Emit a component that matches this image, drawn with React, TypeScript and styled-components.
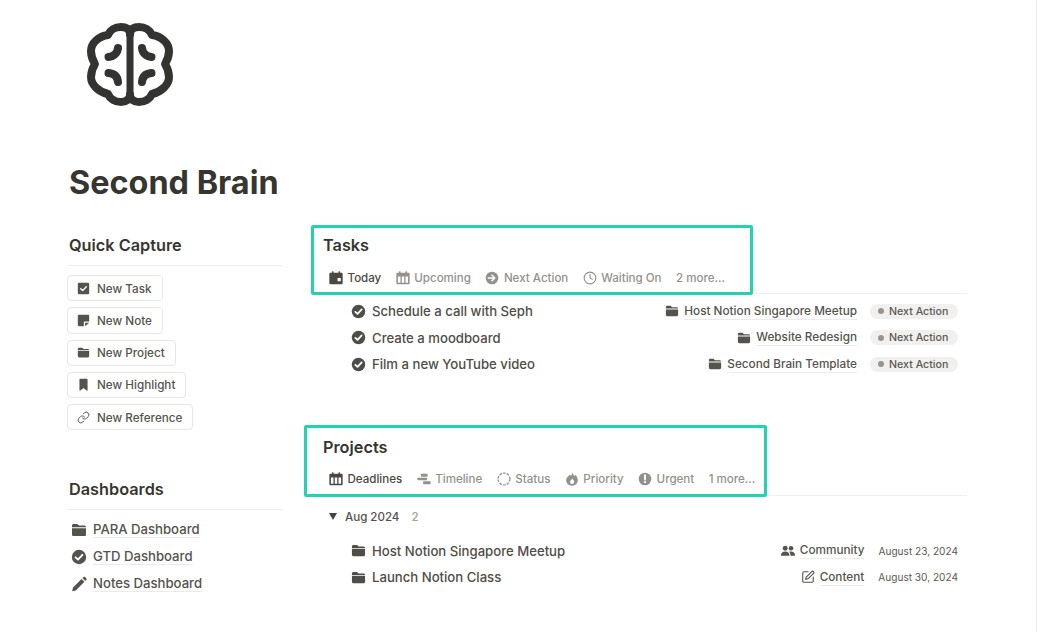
import React from 'react'
import styled, { createGlobalStyle } from 'styled-components'
import { Clock, Link, SquarePen } from 'lucide-react'

const Global = createGlobalStyle`
  html, body {
    margin: 0;
    padding: 0;
    background: #fff;
    font-family: Inter, "Liberation Sans", sans-serif;
    -webkit-font-smoothing: antialiased;
  }
  * { box-sizing: border-box; }
`

const Page = styled.div`
  width: 1037px;
  height: 632px;
  border-right: 1px solid #ececea;
  padding: 23px 0 0 67px;
  overflow: hidden;
  color: #37352f;
`
const Logo = styled.svg`
  display: block;
  width: 86px;
  height: 83px;
  margin-left: 20px;
  color: #333331;
`
const Title = styled.h1`
  margin: 57px 0 0 2px;
  height: 40px;
  line-height: 40px;
  font-size: 32.4px;
  font-weight: 700;
`
const Columns = styled.div`
  display: flex;
  gap: 41px;
  margin-top: 30px;
`
const Left = styled.div`
  width: 215px;
  flex: none;
`
const Right = styled.div`
  width: 644px;
  flex: none;
`
const SideHeading = styled.div<{ $top?: number }>`
  height: 33px;
  padding: 0 0 0 2px;
  line-height: 24px;
  font-size: 16.3px;
  font-weight: 600;
  border-bottom: 1px solid #eeeeec;
  margin-top: ${p => p.$top ?? 0}px;
`
const Buttons = styled.div`
  display: flex;
  flex-direction: column;
  align-items: flex-start;
  gap: 6px;
  margin-top: 9px;
`
const Button = styled.div`
  display: flex;
  align-items: center;
  gap: 7px;
  height: 26.25px;
  padding: 1px 10px 0 9px;
  border: 1px solid #e7e6e3;
  border-radius: 4px;
  font-size: 11.7px;
  font-weight: 500;
  color: #55534e;
  svg { width: 13px; height: 13px; flex: none; margin-top: -1px; }
`
const NavList = styled.div`
  margin-top: 6px;
`
const NavItem = styled.div`
  display: flex;
  align-items: center;
  height: 27px;
  padding-left: 4px;
  font-size: 13.15px;
  font-weight: 500;
  color: #55534e;
  svg { width: 16px; height: 16px; margin-right: 6px; flex: none; }
`
const Underlined = styled.span`
  line-height: 16px;
  border-bottom: 1px solid #ecebe9;
`
const Section = styled.section<{ $top?: number }>`
  position: relative;
  margin-top: ${p => p.$top ?? 0}px;
`
const Highlight = styled.div<{ $left: number; $top: number; $w: number; $h: number }>`
  position: absolute;
  left: ${p => p.$left}px;
  top: ${p => p.$top}px;
  width: ${p => p.$w}px;
  height: ${p => p.$h}px;
  border: 3px solid #22d3ae;
  border-radius: 2px;
`
const SectionTitle = styled.div`
  height: 24px;
  line-height: 24px;
  font-size: 16.3px;
  font-weight: 600;
`
const Tabs = styled.div`
  display: flex;
  align-items: center;
  gap: 14.5px;
  height: 27px;
  margin-top: 10px;
  padding: 0 0 5px 6px;
  border-bottom: 1px solid #eeeeec;
`
const Tab = styled.div<{ $active?: boolean }>`
  display: flex;
  align-items: center;
  gap: 4.5px;
  font-size: 11.55px;
  font-weight: 500;
  line-height: 20px;
  color: ${p => (p.$active ? '#4a4843' : '#93918c')};
  svg { width: 14px; height: 14px; flex: none; }
`
const Rows = styled.div<{ $top: number }>`
  margin-top: ${p => p.$top}px;
`
const Row = styled.div`
  display: flex;
  align-items: center;
  justify-content: space-between;
  height: 26.5px;
  padding: 0 9px 0 28px;
`
const RowTitle = styled.div`
  display: flex;
  align-items: center;
  gap: 6px;
  font-size: 13.15px;
  font-weight: 500;
  color: #4f4d48;
  svg { width: 15px; height: 15px; flex: none; }
`
const RowMeta = styled.div`
  display: flex;
  align-items: center;
  gap: 13px;
`
const MetaLink = styled.div`
  display: flex;
  align-items: center;
  gap: 5px;
  font-size: 11.75px;
  font-weight: 500;
  color: #55534e;
  svg { width: 14px; height: 14px; flex: none; }
`
const Pill = styled.div`
  display: flex;
  align-items: center;
  gap: 5px;
  width: 88px;
  height: 15px;
  padding-left: 8px;
  border-radius: 8px;
  background: #f1f0ee;
  font-size: 10.65px;
  font-weight: 500;
  color: #5c5a55;
`
const Dot = styled.span`
  width: 6px;
  height: 6px;
  border-radius: 50%;
  background: #979590;
`
const DateText = styled.div`
  margin-left: 1px;
  font-size: 10.1px;
  font-weight: 400;
  color: #5c5a55;
  white-space: nowrap;
`
const Group = styled.div`
  display: flex;
  align-items: center;
  height: 20px;
  margin-top: 11px;
  padding-left: 6px;
  font-size: 11.55px;
  font-weight: 500;
  color: #55534e;
`
const Caret = styled.span`
  width: 0;
  height: 0;
  margin-right: 8px;
  border-left: 4px solid transparent;
  border-right: 4px solid transparent;
  border-top: 7px solid #44423d;
`
const Count = styled.span`
  margin-left: 12px;
  color: #a3a19c;
`

type P = { children: React.ReactNode }
const Ico = ({ children }: P) => (
  <svg viewBox="0 0 16 16" fill="currentColor" aria-hidden="true">{children}</svg>
)
const check = 'M4.6 8.3 7 10.6 11.4 5.8'
const FolderIcon = () => (
  <Ico>
    <path d="M1 3.6C1 2.7 1.7 2 2.6 2h3.1c.5 0 .9.2 1.2.5L8 3.6h5.4c.9 0 1.6.7 1.6 1.6H1z" />
    <path d="M1 6.2h14v6.2c0 .9-.7 1.6-1.6 1.6H2.6c-.9 0-1.6-.7-1.6-1.6z" />
  </Ico>
)
const CheckCircle = () => (
  <Ico>
    <circle cx="8" cy="8" r="7.2" />
    <path d={check} fill="none" stroke="#fff" strokeWidth="1.8" strokeLinecap="round" strokeLinejoin="round" />
  </Ico>
)
const CheckBox = () => (
  <Ico>
    <rect x="1" y="1" width="14" height="14" rx="1.6" />
    <path d={check} fill="none" stroke="#fff" strokeWidth="1.7" strokeLinecap="round" strokeLinejoin="round" />
  </Ico>
)
const NoteIcon = () => (
  <Ico>
    <path d="M2.5 1h11c.8 0 1.500.7 1.500 1.500v6.700H9.500c-.6 0-1.100.5-1.100 1.100V15H2.500C1.700 15 1 14.300 1 13.500v-11C1 1.700 1.700 1 2.500 1z" />
    <path d="M10 10.800h5L10 15z" />
  </Ico>
)
const BookmarkIcon = () => (
  <Ico>
    <path d="M4 .8h8c.6 0 1 .4 1 1v13.400c0 .4-.4.6-.7.4L8 12.400l-4.300 3.200c-.3.2-.7 0-.7-.4V1.800c0-.6.4-1 1-1z" />
  </Ico>
)
const PencilIcon = () => (
  <Ico>
    <path d="M1.200 15.200 2 11.600 10.600 3 13.400 5.800 4.800 14.400z" />
    <path d="M11.500 2.100 12.600 1c.4-.4 1-.4 1.400 0l1.400 1.400c.4.4.4 1 0 1.400l-1.100 1.100z" />
  </Ico>
)
const TodayIcon = () => (
  <Ico>
    <rect x="3.400" y="0.400" width="1.800" height="3" rx=".5" />
    <rect x="10.800" y="0.400" width="1.800" height="3" rx=".5" />
    <path fillRule="evenodd" d="M1.800 2h12.400c.8 0 1.400.6 1.400 1.400v10.200c0 .8-.6 1.400-1.400 1.400H1.800c-.8 0-1.400-.6-1.400-1.400V3.400C.4 2.600 1 2 1.800 2zM9.800 8v3.800h3.600V8z" />
  </Ico>
)
const GridCalendar = () => (
  <Ico>
    <rect x="3.400" y="0.400" width="1.800" height="3" rx=".5" />
    <rect x="10.800" y="0.400" width="1.800" height="3" rx=".5" />
    <path fillRule="evenodd" d="M1.800 2h12.400c.8 0 1.400.6 1.400 1.400v10.200c0 .8-.6 1.400-1.400 1.400H1.800c-.8 0-1.400-.6-1.400-1.400V3.400C.4 2.600 1 2 1.800 2zM2.200 6.400v7h2.900v-7zM6.600 6.400v7h2.800v-7zM10.900 6.400v7h2.900v-7z" />
  </Ico>
)
const ArrowCircle = () => (
  <Ico>
    <circle cx="8" cy="8" r="7.200" />
    <path d="M3.800 8h7M8 4.900 11.100 8 8 11.100" fill="none" stroke="#fff" strokeWidth="1.800" strokeLinecap="round" strokeLinejoin="round" />
  </Ico>
)
const TimelineIcon = () => (
  <Ico>
    <rect x="4.500" y="2" width="7.500" height="3.400" rx=".6" />
    <rect x="0.500" y="6.600" width="11" height="2.800" rx=".6" />
    <rect x="7" y="10.600" width="8.500" height="3.400" rx=".6" />
  </Ico>
)
const StatusIcon = () => (
  <Ico>
    <circle cx="8" cy="8" r="6.800" fill="none" stroke="currentColor" strokeWidth="1.500" strokeDasharray="3 1.300" />
  </Ico>
)
const FlameIcon = () => (
  <Ico>
    <path fillRule="evenodd" d="M8.400.2c.5 2.300 1.600 3.300 2.600 4.500.3-.5.5-1 .5-1.600 1.900 1.300 3.100 3.700 3.100 6.200 0 3.700-2.900 6.300-6.600 6.300S1.400 13 1.400 9.400C1.400 5.800 5 4.400 5.600 2.600c.4.500.7 1 .8 1.700C7.600 3.400 8.400 2 8.400.2zM8.300 7.400c-.3 1.300-2.500 2.100-2.500 4 0 1.300 1 2.200 2.300 2.200 1.400 0 2.400-.9 2.400-2.200 0-1.500-1.400-2.400-2.200-4z" />
  </Ico>
)
const AlertIcon = () => (
  <Ico>
    <circle cx="8" cy="8" r="7.200" />
    <path d="M8 3.800v4.800" fill="none" stroke="#fff" strokeWidth="2.200" strokeLinecap="round" />
    <circle cx="8" cy="11.600" r="1.200" fill="#fff" />
  </Ico>
)
const PeopleIcon = () => (
  <Ico>
    <circle cx="4.800" cy="4.800" r="2.800" />
    <circle cx="11.500" cy="4.800" r="2.600" />
    <path d="M0 12.500c0-2.400 2.100-4 4.800-4s4.800 1.600 4.800 4v1H0z" />
    <path d="M10.800 13.500v-1c0-1.500-.6-2.900-1.600-3.700.7-.2 1.400-.3 2.200-.3 2.600 0 4.600 1.600 4.600 4v1z" />
  </Ico>
)

const halfBrain = (
  <>
    <path d="M43 11C43 6 47 4 52 4C58 4 63 7 65 12C74 13 82 20 82 28C82 33 80.500 37 78 41C80.500 45 82 49 82 54C82 62 74 69 65 71C63 76 58 79 52 79C47 79 43 76 43 72" />
    <path d="M55 25C55.500 30 59 33.500 64.500 34" />
    <path d="M64.500 50C59 50.500 55.500 53 55 59" />
  </>
)

const BrainLogo = () => (
  <Logo viewBox="0 0 86 83" fill="none" stroke="currentColor" strokeWidth="8" strokeLinecap="round" strokeLinejoin="round">
    <path d="M43 10V73" strokeWidth="7" strokeLinecap="butt" />
    <g>{halfBrain}</g>
    <g transform="matrix(-1 0 0 1 86 0)">{halfBrain}</g>
  </Logo>
)

const tasks = [
  { name: 'Schedule a call with Seph', project: 'Host Notion Singapore Meetup' },
  { name: 'Create a moodboard', project: 'Website Redesign' },
  { name: 'Film a new YouTube video', project: 'Second Brain Template' },
]

export default function App() {
  return (
    <Page>
      <Global />
      <BrainLogo />
      <Title>Second Brain</Title>
      <Columns>
        <Left>
          <SideHeading>Quick Capture</SideHeading>
          <Buttons>
            <Button><CheckBox />New Task</Button>
            <Button><NoteIcon />New Note</Button>
            <Button><FolderIcon />New Project</Button>
            <Button><BookmarkIcon />New Highlight</Button>
            <Button><Link strokeWidth={1.8} />New Reference</Button>
          </Buttons>
          <SideHeading $top={47}>Dashboards</SideHeading>
          <NavList>
            <NavItem><FolderIcon /><Underlined>PARA Dashboard</Underlined></NavItem>
            <NavItem><CheckCircle /><Underlined>GTD Dashboard</Underlined></NavItem>
            <NavItem><PencilIcon /><Underlined>Notes Dashboard</Underlined></NavItem>
          </NavList>
        </Left>
        <Right>
          <Section>
            <SectionTitle>Tasks</SectionTitle>
            <Tabs>
              <Tab $active><TodayIcon />Today</Tab>
              <Tab><GridCalendar />Upcoming</Tab>
              <Tab><ArrowCircle />Next Action</Tab>
              <Tab><Clock strokeWidth={1.9} />Waiting On</Tab>
              <Tab>2 more...</Tab>
            </Tabs>
            <Highlight $left={-12} $top={-8} $w={442} $h={70} />
            <Rows $top={4}>
              {tasks.map(t => (
                <Row key={t.name}>
                  <RowTitle><CheckCircle />{t.name}</RowTitle>
                  <RowMeta>
                    <MetaLink><FolderIcon /><Underlined>{t.project}</Underlined></MetaLink>
                    <Pill><Dot />Next Action</Pill>
                  </RowMeta>
                </Row>
              ))}
            </Rows>
          </Section>
          <Section $top={57}>
            <SectionTitle>Projects</SectionTitle>
            <Tabs>
              <Tab $active><GridCalendar />Deadlines</Tab>
              <Tab><TimelineIcon />Timeline</Tab>
              <Tab><StatusIcon />Status</Tab>
              <Tab><FlameIcon />Priority</Tab>
              <Tab><AlertIcon />Urgent</Tab>
              <Tab>1 more...</Tab>
            </Tabs>
            <Highlight $left={-19} $top={-10} $w={463} $h={72} />
            <Group><Caret />Aug 2024<Count>2</Count></Group>
            <Rows $top={11}>
              <Row>
                <RowTitle><FolderIcon />Host Notion Singapore Meetup</RowTitle>
                <RowMeta>
                  <MetaLink><PeopleIcon /><Underlined>Community</Underlined></MetaLink>
                  <DateText>August 23, 2024</DateText>
                </RowMeta>
              </Row>
              <Row>
                <RowTitle><FolderIcon />Launch Notion Class</RowTitle>
                <RowMeta>
                  <MetaLink><SquarePen strokeWidth={1.9} /><Underlined>Content</Underlined></MetaLink>
                  <DateText>August 30, 2024</DateText>
                </RowMeta>
              </Row>
            </Rows>
          </Section>
        </Right>
      </Columns>
    </Page>
  )
}
